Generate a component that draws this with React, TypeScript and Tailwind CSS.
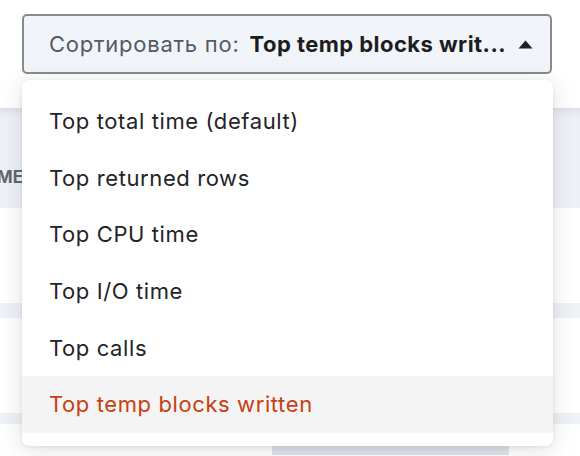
import React from "react";

const items = [
  "Top total time (default)",
  "Top returned rows",
  "Top CPU time",
  "Top I/O time",
  "Top calls",
  "Top temp blocks written",
];

export default function App() {
  return (
    <div className="relative w-[580px] h-[456px] overflow-hidden bg-white font-['Inter','Noto_Sans',sans-serif]">
      <div className="pt-[14px] px-[22px]">
        <button className="flex h-[60px] w-[530px] items-center rounded-[5px] border-2 border-[#8a8a8a] bg-[#f1f4f9] pl-[25px] pr-[17px] text-[22px] leading-none">
          <span className="text-[#555a61] tracking-[0.75px]">Сортировать по:</span>
          <span className="ml-[10px] font-bold text-[#1c1d1f] tracking-[0.45px]">Top temp blocks writ...</span>
          <span className="ml-auto">
            <svg width="15" height="9" viewBox="0 0 15 9">
              <path d="M7.5 0.5 L14.5 8.5 L0.5 8.5 Z" fill="#1f2125" />
            </svg>
          </span>
        </button>
      </div>

      <div className="mt-[34px] flex flex-col">
        <div className="flex h-[100px] items-center bg-[#eef1f6] shadow-[inset_0_8px_8px_-6px_rgba(40,50,70,0.12)]">
          <div className="flex w-[23px] justify-end overflow-hidden pt-[40px]">
            <span className="whitespace-nowrap text-[17px] font-bold uppercase text-[#60656f]">TIME</span>
          </div>
        </div>
        <div className="h-[95px] bg-white" />
        <div className="h-[15px] bg-[#eef1f6]" />
        <div className="h-[95px] bg-white" />
        <div className="h-[11px] bg-[#eef1f6]" />
        <div className="h-[22px] bg-white pl-[272px] pt-[11px]">
          <div className="h-[20px] w-[237px] bg-[#dfe3ea]" />
        </div>
      </div>

      <div className="absolute left-[22px] top-[80px] w-[531px] rounded-[7px] bg-white py-[13px] shadow-[0_4px_24px_rgba(20,30,50,0.13),0_1px_4px_rgba(20,30,50,0.08)]">
        {items.map((t, i) => (
          <div
            key={t}
            className={
              i === 5
                ? "flex h-[56.7px] items-center bg-[#f4f4f4] pl-[27px] text-[22px] tracking-[0.6px] text-[#c7400f]"
                : "flex h-[56.7px] items-center pl-[27px] text-[22px] tracking-[0.6px] text-[#232427]"
            }
          >
            {t}
          </div>
        ))}
      </div>
    </div>
  );
}
